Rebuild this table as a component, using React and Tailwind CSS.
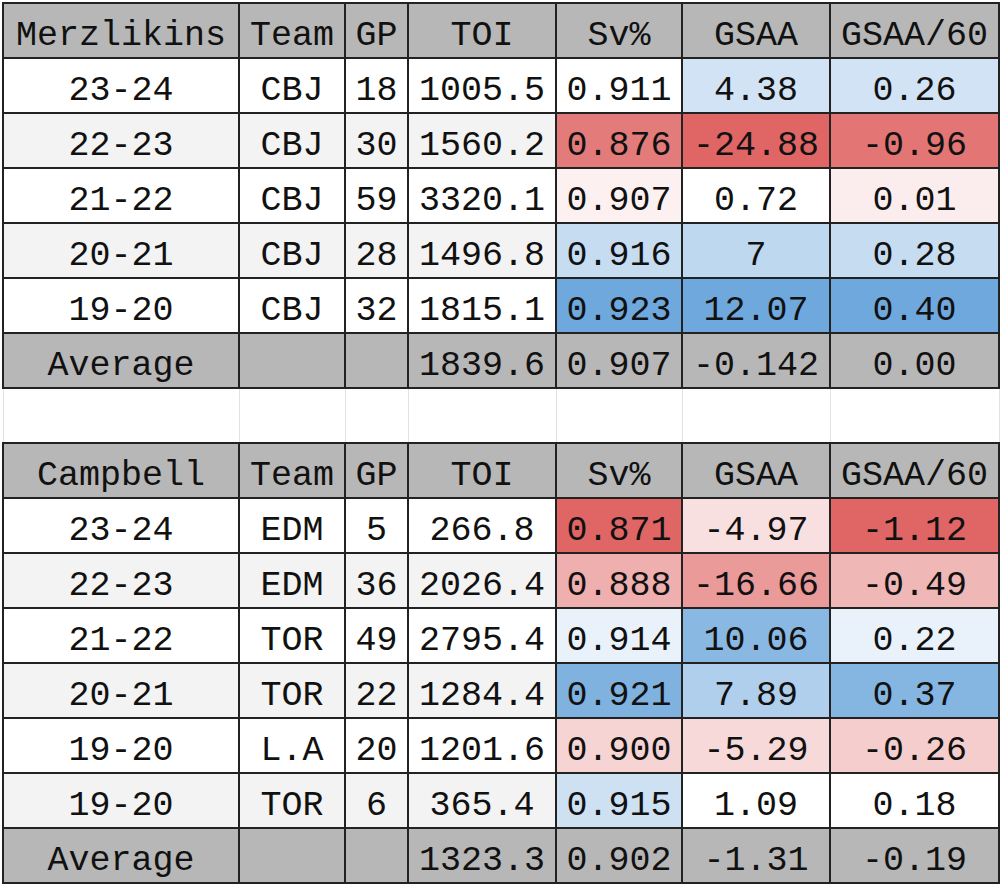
// App.jsx — goalie stats sheet
const RED = [224, 102, 102]
const BLUE = [111, 168, 220]

// t in [-1, 1]: negative → red, positive → blue, 0 → white
const scale = (t) => {
  if (t == null) return undefined
  const c = t < 0 ? RED : BLUE
  const k = Math.min(1, Math.abs(t))
  const mix = c.map((v) => Math.round(255 + (v - 255) * k))
  return `rgb(${mix.join(',')})`
}

const tables = [
  {
    name: 'Merzlikins',
    rows: [
      ['23-24', 'CBJ', '18', '1005.5', ['0.911', 0], ['4.38', 0.32], ['0.26', 0.32]],
      ['22-23', 'CBJ', '30', '1560.2', ['0.876', -0.86], ['-24.88', -1], ['-0.96', -0.9]],
      ['21-22', 'CBJ', '59', '3320.1', ['0.907', -0.1], ['0.72', 0], ['0.01', -0.12]],
      ['20-21', 'CBJ', '28', '1496.8', ['0.916', 0.4], ['7', 0.45], ['0.28', 0.4]],
      ['19-20', 'CBJ', '32', '1815.1', ['0.923', 1], ['12.07', 1], ['0.40', 1]],
    ],
    avg: ['1839.6', '0.907', '-0.142', '0.00'],
  },
  {
    name: 'Campbell',
    rows: [
      ['23-24', 'EDM', '5', '266.8', ['0.871', -1], ['-4.97', -0.2], ['-1.12', -1]],
      ['22-23', 'EDM', '36', '2026.4', ['0.888', -0.52], ['-16.66', -0.66], ['-0.49', -0.47]],
      ['21-22', 'TOR', '49', '2795.4', ['0.914', 0.15], ['10.06', 0.82], ['0.22', 0.15]],
      ['20-21', 'TOR', '22', '1284.4', ['0.921', 0.88], ['7.89', 0.55], ['0.37', 0.85]],
      ['19-20', 'L.A', '20', '1201.6', ['0.900', -0.28], ['-5.29', -0.25], ['-0.26', -0.33]],
      ['19-20', 'TOR', '6', '365.4', ['0.915', 0.35], ['1.09', 0], ['0.18', 0]],
    ],
    avg: ['1323.3', '0.902', '-1.31', '-0.19'],
  },
]

const cell = 'border-2 border-[#222] text-center align-middle whitespace-nowrap px-0 pt-[11px] pb-0'

const Header = ({ name }) => (
  <tr className="h-[55px] bg-[#b7b7b7]">
    {[name, 'Team', 'GP', 'TOI', 'Sv%', 'GSAA', 'GSAA/60'].map((h, i) => (
      <td key={i} className={cell}>{h}</td>
    ))}
  </tr>
)

const Row = ({ r, i }) => (
  <tr className={`h-[55px] ${i % 2 ? 'bg-[#f3f3f3]' : 'bg-white'}`}>
    {r.slice(0, 4).map((v, j) => (
      <td key={j} className={cell}>{v}</td>
    ))}
    {r.slice(4).map(([v, t], j) => (
      <td key={j + 4} className={cell} style={{ backgroundColor: scale(t) }}>{v}</td>
    ))}
  </tr>
)

const Avg = ({ vals }) => (
  <tr className="h-[55px] bg-[#b7b7b7]">
    <td className={cell}>Average</td>
    <td className={cell}></td>
    <td className={cell}></td>
    {vals.map((v, j) => (
      <td key={j} className={cell}>{v}</td>
    ))}
  </tr>
)

export default function App() {
  return (
    <div className="min-h-screen bg-white pl-[2px] pt-[2px] text-[#111] font-['Liberation_Mono',monospace] text-[35px] leading-none">
      <table className="table-fixed border-collapse w-[996px]">
        <colgroup>
          <col className="w-[236px]" />
          <col className="w-[106px]" />
          <col className="w-[63px]" />
          <col className="w-[148px]" />
          <col className="w-[126px]" />
          <col className="w-[148px]" />
          <col className="w-[169px]" />
        </colgroup>
        <tbody>
          <Header name={tables[0].name} />
          {tables[0].rows.map((r, i) => <Row key={i} r={r} i={i} />)}
          <Avg vals={tables[0].avg} />
          <tr className="h-[55px]">
            {Array.from({ length: 7 }).map((_, j) => (
              <td key={j} className="border border-[#e2e2e2] p-0"></td>
            ))}
          </tr>
          <Header name={tables[1].name} />
          {tables[1].rows.map((r, i) => <Row key={i} r={r} i={i} />)}
          <Avg vals={tables[1].avg} />
        </tbody>
      </table>
    </div>
  )
}
